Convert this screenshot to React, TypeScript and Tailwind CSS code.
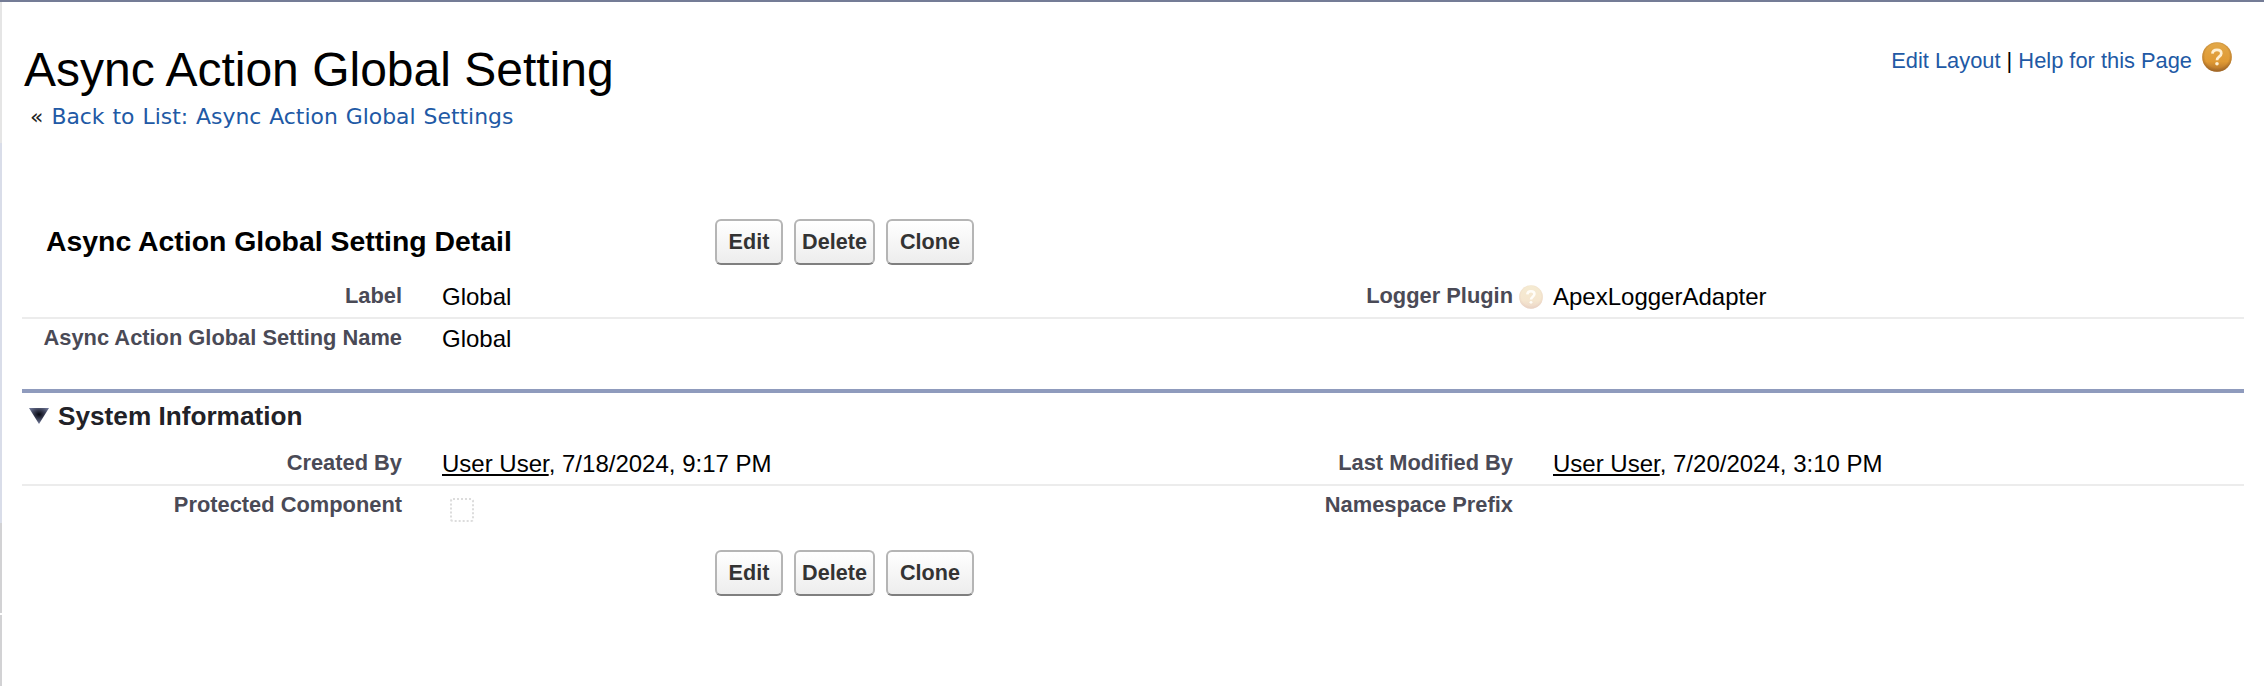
import React from "react";

function Buttons() {
  const base =
    "box-border h-[46px] rounded-[6px] border-2 border-[#b5b5b5] border-b-[#7f7f7f] bg-linear-to-b from-white to-[#ededed] text-[21.6px] leading-[42px] font-bold text-[#333]";
  return (
    <div className="flex gap-[11px]">
      <button className={base + " w-[68px]"}>Edit</button>
      <button className={base + " w-[81px]"}>Delete</button>
      <button className={base + " w-[88px]"}>Clone</button>
    </div>
  );
}

function HelpBall({ size, faded }: { size: number; faded?: boolean }) {
  const id = faded ? "ballFaded" : "ball";
  return (
    <svg width={size} height={size} viewBox="0 0 30 30" className="block shrink-0">
      <defs>
        <linearGradient id={id + "Fill"} x1="0" y1="0" x2="0" y2="1">
          <stop offset="0" stopColor={faded ? "#f5ebd2" : "#e2a94a"} />
          <stop offset="0.65" stopColor={faded ? "#f5e6cf" : "#e09a34"} />
          <stop offset="1" stopColor={faded ? "#ebd6c8" : "#b0702a"} />
        </linearGradient>
        <radialGradient id={id + "Rim"} cx="0.5" cy="0.46" r="0.54">
          <stop offset="0.75" stopColor={faded ? "#e6cdbf" : "#8f5a22"} stopOpacity="0" />
          <stop offset="1" stopColor={faded ? "#e6cdbf" : "#8f5a22"} stopOpacity="0.6" />
        </radialGradient>
      </defs>
      <circle cx="15" cy="15" r="14.8" fill={`url(#${id}Fill)`} />
      <circle cx="15" cy="15" r="14.8" fill={`url(#${id}Rim)`} />
      <path
        d="M10.4 11.600c.2-2.600 2-3.800 4.600-3.800 2.600 0 4.300 1.300 4.300 3.600 0 3.200-4.300 3.200-4.300 6.800"
        fill="none"
        stroke={faded ? "#fffdf8" : "#fff0d2"}
        strokeWidth={faded ? 3.2 : 2.7}
      />
      <circle cx="15" cy="21.7" r="1.8" fill={faded ? "#fffdf8" : "#fff0d2"} />
    </svg>
  );
}

function Label({ children }: { children: React.ReactNode }) {
  return (
    <div className="text-right text-[21.85px] leading-[26px] font-bold whitespace-nowrap text-[#4a4a56]">
      {children}
    </div>
  );
}

function Value({ children }: { children?: React.ReactNode }) {
  return (
    <div className="pt-[1px] text-[24px] leading-[26px] whitespace-nowrap text-black">{children}</div>
  );
}

function Row({ children, last }: { children: React.ReactNode; last?: boolean }) {
  return (
    <div
      className={
        "grid h-[42px] grid-cols-[380px_40px_691px_380px_40px_1fr] pt-[6px] " +
        (last ? "" : "border-b-2 border-[#ececec]")
      }
    >
      {children}
    </div>
  );
}

export default function App() {
  return (
    <div className="flex h-[686px] w-[2264px] flex-col overflow-hidden border-t-2 border-[#747c96] bg-white font-['Liberation_Sans',Arial,sans-serif] text-black">
      <div className="flex flex-1">
        <div className="flex w-[2px] shrink-0 flex-col">
          <div className="h-[141px] bg-[#e5e5e5]" />
          <div className="h-[380px] bg-[#d9dde9]" />
          <div className="h-[90px] bg-[#d2d2d4]" />
          <div className="h-[2px] bg-white" />
          <div className="flex-1 bg-[#d2d2d4]" />
        </div>
        <main className="flex w-[2242px] flex-col pl-[20px]">
          <header className="flex h-[213px] justify-between">
            <div className="pt-[40px]">
              <h1 className="pl-[2px] text-[48px] leading-[56px] whitespace-nowrap">
                Async Action Global Setting
              </h1>
              <div className="flex gap-[8px] pt-[5px] pl-[8px] font-['DejaVu_Sans',Verdana,sans-serif] text-[21.9px] leading-[28px] [word-spacing:1px] whitespace-nowrap">
                <span className="text-[#222]">«</span>
                <a className="text-[#2159a5]">Back to List: Async Action Global Settings</a>
              </div>
            </div>
            <div className="flex pt-[40px] pr-[12px]">
              <div className="pt-[6px] text-[21.85px] leading-[26px] whitespace-nowrap">
                <a className="text-[#2159a5]">Edit Layout</a> |{" "}
                <a className="text-[#2159a5]">Help for this Page</a>
              </div>
              <div className="pl-[10px]">
                <HelpBall size={30} />
              </div>
            </div>
          </header>

          <div className="flex h-[62px] pt-[4px]">
            <h2 className="w-[693px] pt-[5px] pl-[24px] text-[28.4px] leading-[34px] font-bold whitespace-nowrap">
              Async Action Global Setting Detail
            </h2>
            <Buttons />
          </div>

          <Row>
            <Label>Label</Label>
            <span />
            <Value>Global</Value>
            <Label>Logger Plugin</Label>
            <div className="pt-[2px] pl-[6px]">
              <HelpBall size={24} faded />
            </div>
            <Value>ApexLoggerAdapter</Value>
          </Row>
          <Row last>
            <Label>Async Action Global Setting Name</Label>
            <span />
            <Value>Global</Value>
          </Row>

          <section className="mt-[28px] border-t-4 border-[#8f9bbd]">
            <div className="flex h-[51px] gap-[9px] pt-[7px] pl-[7px]">
              <svg width="20" height="16" viewBox="0 0 20 16" className="mt-[8px]">
                <defs>
                  <radialGradient id="tri" cx="0.5" cy="0.4" r="0.55">
                    <stop offset="0" stopColor="#05060f" />
                    <stop offset="1" stopColor="#6a7292" />
                  </radialGradient>
                </defs>
                <path d="M0 0h20l-10 16z" fill="url(#tri)" />
              </svg>
              <h3 className="text-[26.2px] leading-[32px] font-bold text-[#222228]">
                System Information
              </h3>
            </div>
            <Row>
              <Label>Created By</Label>
              <span />
              <Value>
                <span className="underline">User User</span>, 7/18/2024, 9:17 PM
              </Value>
              <Label>Last Modified By</Label>
              <span />
              <Value>
                <span className="underline">User User</span>, 7/20/2024, 3:10 PM
              </Value>
            </Row>
            <Row last>
              <Label>Protected Component</Label>
              <span />
              <div className="pt-[6px] pl-[8px]">
                <div className="size-[24px] rounded-[3px] border-2 border-dotted border-[#dcdcdc]" />
              </div>
              <Label>Namespace Prefix</Label>
            </Row>
          </section>

          <div className="pt-[22px] pl-[693px]">
            <Buttons />
          </div>
        </main>
      </div>
    </div>
  );
}
